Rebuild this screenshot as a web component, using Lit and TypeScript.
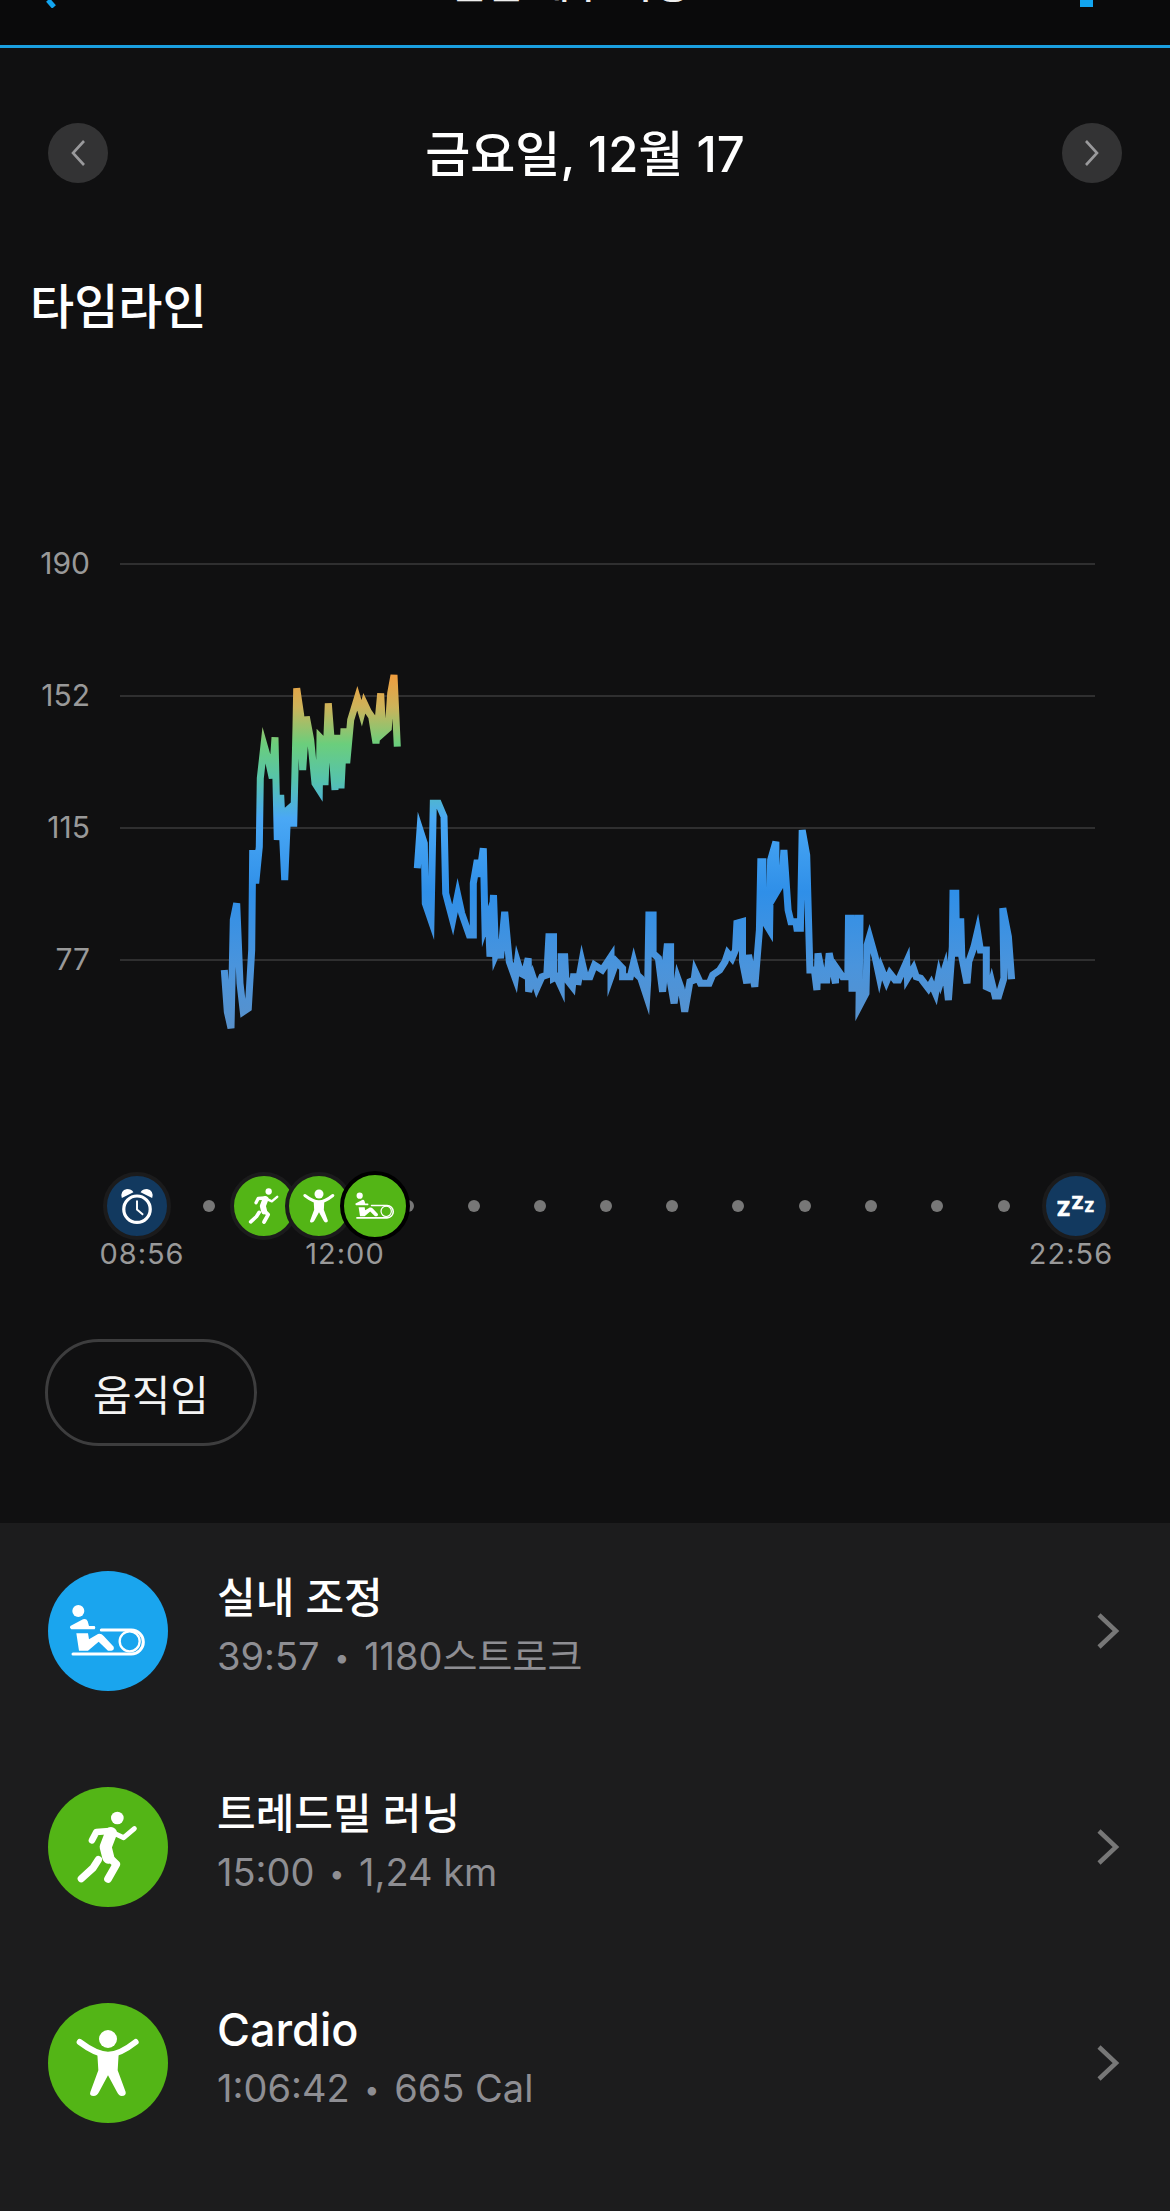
import { LitElement, html, css, svg } from 'lit';
import { customElement } from 'lit/decorators.js';

// chart traces, read off zoomed crops: [x, y] in crop pixels
const A: number[][] = [[103,960],[112,1085],[123,1135],[130,810],[140,760],[150,1000],[160,1085],[175,1075],[185,900],[188,600],[197,700],[208,590],[211,385],[222,285],[235,330],[247,385],[255,262],[262,570],[272,435],[284,690],[293,480],[310,465],[311,530],[318,230],[320,115],[332,195],[338,360],[349,200],[362,270],[375,400],[388,420],[390,262],[403,275],[405,405],[415,160],[425,290],[435,420],[440,265],[453,265],[453,415],[462,235],[470,340],[482,210],[502,145],[515,190],[523,160],[535,185],[545,200],[558,280],[572,130],[578,250],[595,235],[602,130],[612,75],[622,290]];
const B: number[][] = [[682,655],[690,540],[703,580],[706,760],[723,810],[730,460],[745,460],[762,500],[767,730],[775,760],[788,810],[803,735],[815,790],[838,855],[850,855],[850,700],[862,630],[868,680],[880,595],[885,830],[895,800]];
const C: number[][] = [[0,530],[10,345],[16,525],[26,500],[30,535],[42,395],[55,545],[72,595],[78,545],[88,580],[97,585],[109,535],[110,635],[122,590],[133,625],[148,590],[162,585],[168,470],[181,470],[181,595],[190,590],[203,620],[203,530],[213,530],[216,595],[235,620],[238,590],[252,590],[250,615],[262,545],[272,590],[285,590],[298,555],[320,570],[345,530],[345,590],[360,545],[378,565],[378,590],[400,590],[410,545],[420,585],[430,595],[447,650],[450,600],[453,405],[465,405],[465,520],[480,535],[492,635],[505,500],[515,500],[515,610],[525,670],[535,595],[545,625],[555,695],[570,605],[582,600],[585,575],[600,610],[625,610],[635,585],[655,570],[670,545],[678,520],[690,535],[700,510],[704,430],[720,425],[720,545],[732,610],[737,525],[755,620],[768,450],[772,245],[778,245],[780,420],[797,450],[800,240],[815,185],[815,340],[832,310],[838,210],[850,390],[858,425],[872,425],[875,445],[885,445],[890,150],[903,225],[912,570],[925,570],[932,630],[935,520],[950,600],[960,600],[967,520],[985,610],[985,560],[1005,590],[1020,590],[1022,415],[1030,415],[1032,625],[1048,625],[1050,415],[1055,415],[1052,680],[1072,640],[1075,495],[1082,470],[1098,530],[1110,590],[1115,565],[1130,605],[1140,580],[1155,600],[1165,600],[1188,545],[1190,595],[1207,565],[1215,590],[1228,595],[1250,625],[1258,610],[1270,640],[1280,585],[1285,605],[1297,565],[1307,660],[1318,500],[1320,340],[1328,340],[1330,520],[1340,520],[1342,415],[1345,530],[1360,610],[1365,545],[1380,500],[1390,455],[1398,510],[1415,510],[1415,620],[1425,625],[1430,605],[1440,648],[1450,648],[1465,595],[1462,385],[1478,470],[1487,598]];

const toPage = (pts: number[][], ox: number, oy: number, sx: number) =>
  pts.map(([x, y]) => `${(ox + x / sx).toFixed(1)},${(oy + y / 3).toFixed(1)}`).join(' ');

const GRID = [
  { label: '190', y: 564 },
  { label: '152', y: 696 },
  { label: '115', y: 828 },
  { label: '77', y: 960 },
];

const DOTS = [209, 408, 474, 540, 606, 672, 738, 805, 871, 937, 1004];

const rowIcon = svg`
  <g fill="#fff">
    <circle cx="146" cy="183" r="18"/>
    <path d="M122 228 L160 208 Q170 204 174 214 L178 228 L195 228 Q199 233 195 238 L125 238 Q118 233 122 228Z"/>
    <path d="M140 250 L175 250 L178 268 L205 252 Q215 250 222 258 L252 290 Q255 300 245 302 L235 302 L207 275 L175 302 L148 302Z"/>
  </g>
  <g fill="none" stroke="#fff" stroke-width="9">
    <path d="M215 240 H305 A36 36 0 0 1 305 312 H130" stroke-linecap="round"/>
    <circle cx="300" cy="274" r="30" stroke-width="7"/>
  </g>`;

const runIcon = svg`
  <circle cx="263" cy="93" r="19" fill="#fff"/>
  <g fill="none" stroke="#fff" stroke-linecap="round" stroke-linejoin="round">
    <path d="M187 160 L200 135 L240 132" stroke-width="20"/>
    <path d="M244 138 L228 180 L236 212" stroke-width="36"/>
    <path d="M252 138 L282 152 L314 125" stroke-width="15"/>
    <path d="M232 205 L260 232 L235 276" stroke-width="23"/>
    <path d="M206 218 L190 243 L155 275" stroke-width="22"/>
  </g>`;

const cardioIcon = svg`
  <circle cx="235" cy="121" r="27" fill="#fff"/>
  <path d="M150 130 Q200 168 235 168 Q270 168 318 130" fill="none" stroke="#fff" stroke-width="18" stroke-linecap="round"/>
  <path fill="#fff" d="M203 165 H267 L264 215 L288 280 Q290 292 276 292 Q268 292 262 280 L235 230 L208 280 Q202 292 192 292 Q178 292 182 280 L206 215Z"/>`;

@customElement('app-root')
export class AppRoot extends LitElement {
  static styles = css`
    :host {
      display: block;
      width: 1170px;
      height: 2211px;
      overflow: hidden;
      background: #101011;
      color: #fff;
      font-family: Inter, "Noto Sans CJK KR", sans-serif;
    }
    svg { display: block; }
    .top {
      height: 45px;
      background: #0a0a0b;
      border-bottom: 3px solid #1a9fe0;
      overflow: hidden;
      display: flex;
      justify-content: space-between;
      padding: 0 77px 0 46px;
    }
    .top-title {
      font-size: 40px;
      line-height: 48px;
      font-weight: 500;
      margin-top: -40px;
      color: #eee;
    }
    .top-back { width: 14px; height: 8px; }
    .top-share { width: 13px; height: 7px; background: #12a5f0; }
    .nav {
      display: flex;
      align-items: center;
      justify-content: space-between;
      margin-top: 75px;
      padding: 0 48px;
      height: 60px;
    }
    .nav-btn {
      width: 60px;
      height: 60px;
      border-radius: 50%;
      background: #333334;
      display: flex;
      align-items: center;
      justify-content: center;
    }
    .date {
      font-size: 49px;
      font-weight: 500;
      padding-bottom: 5px;
    }
    h2 {
      margin: 89px 0 0 30px;
      height: 71px;
      font-size: 48px;
      line-height: 70px;
      font-weight: 500;
    }
    .chart { height: 520px; margin-top: 187px; }
    .chart text {
      font-family: Inter, sans-serif;
      font-size: 30px;
      fill: #999;
    }
    .timeline {
      position: relative;
      height: 120px;
      margin-top: 110px;
    }
    .dot {
      position: absolute;
      top: 40px;
      width: 12px;
      height: 12px;
      margin-left: -6px;
      border-radius: 50%;
      background: #777;
    }
    .pin {
      position: absolute;
      top: 12px;
      width: 60px;
      height: 60px;
      margin-left: -34px;
      border-radius: 50%;
      border: 4px solid #1b1b1c;
      background: #53b516;
    }
    .pin.night { background: #12395f; }
    .pin.top-pin { border-color: #000; width: 62px; height: 62px; top: 11px; margin-left: -35px; }
    .pin svg { width: 100%; height: 100%; }
    .time {
      position: absolute;
      top: 76px;
      transform: translateX(-50%);
      font-size: 29px;
      line-height: 36px;
      letter-spacing: 1px;
      color: #999;
    }
    .pill {
      box-sizing: border-box;
      width: 212px;
      height: 107px;
      margin: 59px 0 0 45px;
      border: 3px solid #3d3d3e;
      border-radius: 54px;
      display: flex;
      align-items: center;
      justify-content: center;
      font-size: 42px;
      color: #f4f4f4;
    }
    .list {
      margin-top: 77px;
      background: #1c1c1d;
      height: 688px;
    }
    .row {
      height: 216px;
      display: flex;
      align-items: center;
      padding: 0 48px;
    }
    .icon { width: 120px; height: 120px; flex: none; }
    .text { flex: 1; margin-left: 49px; padding-bottom: 7px; }
    .name {
      font-size: 42px;
      line-height: 59px;
      font-weight: 500;
    }
    .name.latin { font-size: 45px; }
    .sub {
      font-size: 38px;
      line-height: 59px;
      color: #8e8e93;
    }
    .sep { font-size: 27px; margin: 0 4px; vertical-align: 3px; }
    .chev { width: 26px; height: 38px; margin-right: 1px; }
  `;

  private chevron(dir: 'l' | 'r') {
    const d = dir === 'l' ? 'M13 1 L2 13 L13 25' : 'M2 1 L13 13 L2 25';
    return html`<svg width="15" height="26" viewBox="0 0 15 26"><path d=${d} fill="none" stroke="#9a9a9c" stroke-width="2.6"/></svg>`;
  }

  private renderChart() {
    return html`<svg class="chart" width="1170" height="520" viewBox="0 530 1170 520">
      <defs>
        <linearGradient id="hr" gradientUnits="userSpaceOnUse" x1="0" y1="670" x2="0" y2="1040">
          <stop offset="0" stop-color="#f59a3a"/>
          <stop offset="0.1" stop-color="#cdb35a"/>
          <stop offset="0.2" stop-color="#6bce7c"/>
          <stop offset="0.3" stop-color="#55c2ad"/>
          <stop offset="0.4" stop-color="#4aa8f5"/>
          <stop offset="0.6" stop-color="#2f8fe8"/>
          <stop offset="0.8" stop-color="#4a94dc"/>
          <stop offset="1" stop-color="#5a90c8"/>
        </linearGradient>
      </defs>
      ${GRID.map((g) => svg`
        <line x1="120" x2="1095" y1=${g.y} y2=${g.y} stroke="#3a3a3b" stroke-width="1.5"/>
        <text x="90" y=${g.y + 10} text-anchor="end">${g.label}</text>`)}
      ${[toPage(A, 190, 650, 3), toPage(B, 190, 650, 3) + ' ' + toPage(C, 490, 780, 2.851)].map((pts) => svg`
        <polyline points=${pts} fill="none" stroke="url(#hr)" stroke-width="7" stroke-linejoin="miter" stroke-miterlimit="6"/>`)}
    </svg>`;
  }

  private renderTimeline() {
    return html`<div class="timeline">
      ${DOTS.map((x) => html`<div class="dot" style="left:${x}px"></div>`)}
      <div class="pin night" style="left:137px">
        <svg viewBox="0 0 186 186">
          <circle cx="93" cy="103" r="41" fill="none" stroke="#fff" stroke-width="10"/>
          <path d="M93 76 V104 L112 120" fill="none" stroke="#fff" stroke-width="6"/>
          <path d="M46 68 Q40 44 62 40 Q76 40 82 50Z M140 68 Q146 44 124 40 Q110 40 104 50Z" fill="#fff"/>
        </svg>
      </div>
      <div class="pin" style="left:264px"><svg viewBox="55 0 360 360">${runIcon}</svg></div>
      <div class="pin" style="left:319px"><svg viewBox="55 13 360 360">${cardioIcon}</svg></div>
      <div class="pin top-pin" style="left:375px"><svg viewBox="55 63 360 360">${rowIcon}</svg></div>
      <div class="pin night" style="left:1076px">
        <svg viewBox="0 0 186 186">
          <g fill="#fff" stroke="#fff" stroke-width="2" font-family="Inter, sans-serif" font-weight="800">
            <text x="33" y="125" font-size="62">Z</text>
            <text x="79" y="103" font-size="55">Z</text>
            <text x="119" y="112" font-size="44">Z</text>
          </g>
        </svg>
      </div>
      <div class="time" style="left:142px">08:56</div>
      <div class="time" style="left:345px">12:00</div>
      <div class="time" style="left:1071px">22:56</div>
    </div>`;
  }

  private renderRow(name: string, a: string, b: string, color: string, view: string, icon: unknown, latin = false) {
    return html`<div class="row">
      <svg class="icon" viewBox=${view}>
        <circle cx="235" cy=${Number(view.split(' ')[1]) + 180} r="180" fill=${color}/>
        ${icon}
      </svg>
      <div class="text">
        <div class="name ${latin ? 'latin' : ''}">${name}</div>
        <div class="sub">${a} <span class="sep">•</span> ${b}</div>
      </div>
      <svg class="chev" viewBox="0 0 26 38"><path d="M4 3 L21 19 L4 35" fill="none" stroke="#777" stroke-width="4.5"/></svg>
    </div>`;
  }

  render() {
    return html`
      <div class="top">
        <svg class="top-back" viewBox="0 0 14 8"><path d="M2 0 L8 7" stroke="#12a5f0" stroke-width="5"/></svg>
        <div class="top-title">일일 세부 사항</div>
        <div class="top-share"></div>
      </div>
      <div class="nav">
        <div class="nav-btn">${this.chevron('l')}</div>
        <div class="date">금요일, 12월 17</div>
        <div class="nav-btn">${this.chevron('r')}</div>
      </div>
      <h2>타임라인</h2>
      ${this.renderChart()}
      ${this.renderTimeline()}
      <div class="pill">움직임</div>
      <div class="list">
        ${this.renderRow('실내 조정', '39:57', '1180스트로크', '#1aa5ee', '55 63 360 360', rowIcon)}
        ${this.renderRow('트레드밀 러닝', '15:00', '1,24 km', '#53b516', '55 0 360 360', runIcon)}
        ${this.renderRow('Cardio', '1:06:42', '665 Cal', '#53b516', '55 13 360 360', cardioIcon, true)}
      </div>
    `;
  }
}
